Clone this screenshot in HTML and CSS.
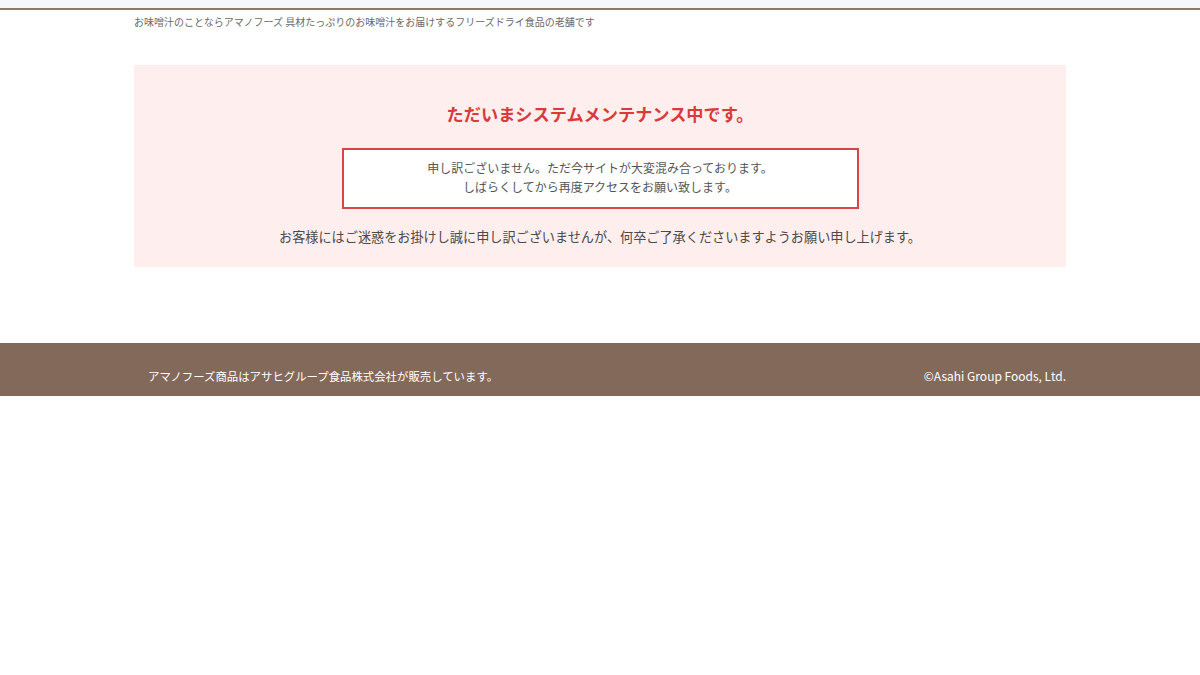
FILE: index.html
```html
<!DOCTYPE html>
<html lang="ja">
<head>
    <meta charset="utf-8">
    <title>ただいまシステムメンテナンス中です。</title>
    <link rel="stylesheet" href="styles.css">
</head>
<body>
    <div class="topbar"></div>
    <header class="header">
        <p class="tagline">お味噌汁のことならアマノフーズ 具材たっぷりのお味噌汁をお届けするフリーズドライ食品の老舗です</p>
    </header>

    <main class="notice">
        <h1 class="notice-title">ただいまシステムメンテナンス中です。</h1>
        <div class="notice-box">
            <p>申し訳ございません。ただ今サイトが大変混み合っております。</p>
            <p>しばらくしてから再度アクセスをお願い致します。</p>
        </div>
        <p class="notice-text">お客様にはご迷惑をお掛けし誠に申し訳ございませんが、何卒ご了承くださいますようお願い申し上げます。</p>
    </main>

    <footer class="footer">
        <div class="footer-inner">
            <p class="footer-note">アマノフーズ商品はアサヒグループ食品株式会社が販売しています。</p>
            <p class="copyright">©Asahi Group Foods, Ltd.</p>
        </div>
    </footer>
</body>
</html>
```

FILE: styles.css
```css
body {
    margin: 0;
    background: #fff;
    color: #555;
    font-family: "Noto Sans CJK JP", "Noto Sans", sans-serif;
}
p, h1 {
    margin: 0;
}
.topbar {
    height: 8px;
    background: #f5f7fa;
    border-bottom: 2px solid #8c7967;
}
.header {
    width: 932px;
    margin: 0 auto;
    padding-top: 5px;
}
.tagline {
    font-size: 10px;
    line-height: 14px;
    color: #6a6a6a;
}
.notice {
    width: 932px;
    margin: 36px auto 0;
    padding: 37px 0 20px;
    background: #ffeeee;
    text-align: center;
}
.notice-title {
    font-size: 17.2px;
    line-height: 24px;
    font-weight: bold;
    color: #d93a3a;
}
.notice-box {
    width: 513px;
    margin: 22px auto 0;
    padding: 8px 0 11px;
    background: #fff;
    border: 2px solid #d74545;
    font-size: 12px;
    line-height: 19px;
    color: #555;
}
.notice-text {
    margin-top: 18px;
    font-size: 13.15px;
    line-height: 20px;
    color: #4a4a4a;
}
.footer {
    margin-top: 76px;
    height: 53px;
    background: #83695a;
    color: #fff;
}
.footer-inner {
    width: 932px;
    margin: 0 auto;
    padding-top: 24px;
    display: flex;
    justify-content: space-between;
    font-size: 11.4px;
    line-height: 18px;
}
.footer-note {
    padding-left: 14px;
}
.copyright {
    font-size: 12px;
}
```
